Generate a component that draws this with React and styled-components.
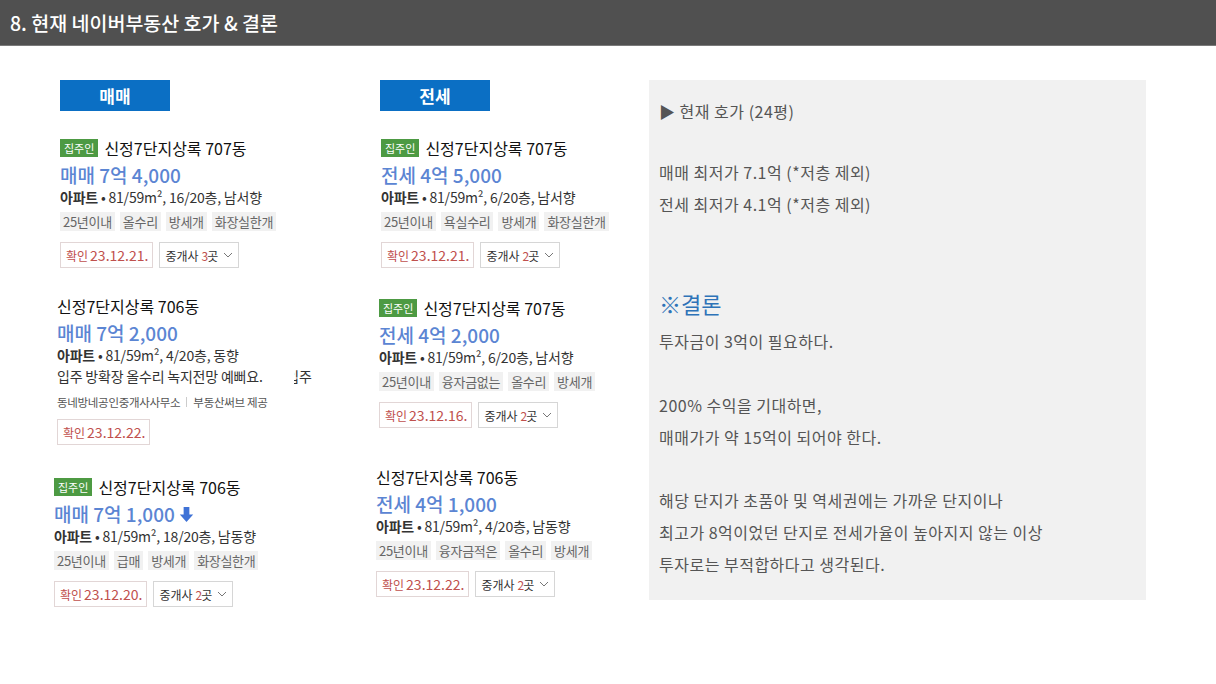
import styled, { createGlobalStyle } from 'styled-components';

const Global = createGlobalStyle`
	body {
		margin: 0;
		background: #fff;
		font-family: "Noto Sans CJK KR", "Noto Sans", sans-serif;
	}
`;

const sale = [
	{
		shift: 6, top: 28, owner: true, name: '신정7단지상록 707동', price: '매매 7억 4,000',
		info: '81/59m², 16/20층, 남서향', tags: ['25년이내', '올수리', '방세개', '화장실한개'],
		date: '23.12.21.', agents: 3,
	},
	{
		shift: 3, top: 29, name: '신정7단지상록 706동', price: '매매 7억 2,000',
		info: '81/59m², 4/20층, 동향', desc: '입주 방확장 올수리 녹지전망 예뻐요.',
		agent: ['동네방네공인중개사사무소', '부동산써브 제공'], date: '23.12.22.',
	},
	{
		shift: 0, top: 33, owner: true, name: '신정7단지상록 706동', price: '매매 7억 1,000', down: true,
		info: '81/59m², 18/20층, 남동향', tags: ['25년이내', '급매', '방세개', '화장실한개'],
		date: '23.12.20.', agents: 2,
	},
];

const rent = [
	{
		shift: 5, top: 28, owner: true, name: '신정7단지상록 707동', price: '전세 4억 5,000',
		info: '81/59m², 6/20층, 남서향', tags: ['25년이내', '욕실수리', '방세개', '화장실한개'],
		date: '23.12.21.', agents: 2,
	},
	{
		shift: 3, top: 31, owner: true, name: '신정7단지상록 707동', price: '전세 4억 2,000',
		info: '81/59m², 6/20층, 남서향', tags: ['25년이내', '융자금없는', '올수리', '방세개'],
		date: '23.12.16.', agents: 2,
	},
	{
		shift: 0, top: 40, name: '신정7단지상록 706동', price: '전세 4억 1,000',
		info: '81/59m², 4/20층, 남동향', tags: ['25년이내', '융자금적은', '올수리', '방세개'],
		date: '23.12.22.', agents: 2,
	},
];

const DownArrow = () => (
	<svg width="15" height="17" viewBox="0 0 14 16">
		<path d="M4.3 1h5.4v7h3.6L7 15 .7 8h3.6z" fill="#3f72d6" />
	</svg>
);

const Chevron = () => (
	<svg width="10" height="6" viewBox="0 0 10 6">
		<path d="M1 1l4 4 4-4" fill="none" stroke="#777" strokeWidth="1" />
	</svg>
);

const Listing = ({ item }) => (
	<Card $shift={item.shift} $top={item.top}>
		<TitleRow>
			{item.owner && <Owner>집주인</Owner>}
			<Name>{item.name}</Name>
		</TitleRow>
		<Price>
			{item.price}
			{item.down && <DownArrow />}
		</Price>
		<Info>
			<b>아파트</b> • {item.info}
		</Info>
		{item.desc && (
			<Desc>
				{item.desc}
				<Cut>
					<span>입주</span>
				</Cut>
			</Desc>
		)}
		{item.agent && (
			<Agent>
				{item.agent[0]}
				<Sep />
				{item.agent[1]}
			</Agent>
		)}
		{item.tags && (
			<Tags>
				{item.tags.map((t) => (
					<Tag key={t}>{t}</Tag>
				))}
			</Tags>
		)}
		<Confirm $tight={!!item.agent}>
			<DateBox>
				<small>확인</small>
				{item.date}
			</DateBox>
			{item.agents && (
				<AgentBox>
					중개사 <em>{item.agents}</em>곳 <Chevron />
				</AgentBox>
			)}
		</Confirm>
	</Card>
);

const App = () => (
	<>
		<Global />
		<Header>8. 현재 네이버부동산 호가 &amp; 결론</Header>
		<Main>
			<Column $width={322}>
				<Label $shift={6}>매매</Label>
				{sale.map((item, i) => (
					<Listing key={i} item={item} />
				))}
			</Column>
			<Column $width={273}>
				<Label $shift={4}>전세</Label>
				{rent.map((item, i) => (
					<Listing key={i} item={item} />
				))}
			</Column>
			<Panel>
				<PanelLine>▶ 현재 호가 (24평)</PanelLine>
				<Blank $h={29} />
				<PanelLine>매매 최저가 7.1억 (*저층 제외)</PanelLine>
				<PanelLine>전세 최저가 4.1억 (*저층 제외)</PanelLine>
				<Blank $h={66} />
				<Conclusion>※결론</Conclusion>
				<PanelLine>투자금이 3억이 필요하다.</PanelLine>
				<Blank $h={32} />
				<PanelLine>200% 수익을 기대하면,</PanelLine>
				<PanelLine>매매가가 약 15억이 되어야 한다.</PanelLine>
				<Blank $h={31} />
				<PanelLine>해당 단지가 초품아 및 역세권에는 가까운 단지이나</PanelLine>
				<PanelLine>최고가 8억이었던 단지로 전세가율이 높아지지 않는 이상</PanelLine>
				<PanelLine>투자로는 부적합하다고 생각된다.</PanelLine>
			</Panel>
		</Main>
	</>
);

const Header = styled.header`
	height: 46px;
	background: #505050;
	border-bottom: 1px solid #7a7a7a;
	box-sizing: border-box;
	color: #fff;
	font-size: 19.5px;
	font-weight: 500;
	line-height: 45px;
	padding-left: 10px;
`;

const Main = styled.main`
	display: flex;
	align-items: flex-start;
	padding: 34px 0 0 54px;
`;

const Column = styled.section`
	width: ${(p) => p.$width}px;
	display: flex;
	flex-direction: column;
	align-items: flex-start;
`;

const Label = styled.div`
	margin-left: ${(p) => p.$shift}px;
	width: 110px;
	height: 31px;
	background: #0b6fc4;
	color: #fff;
	font-size: 17px;
	font-weight: 700;
	line-height: 31px;
	text-align: center;
`;

const Card = styled.article`
	margin-left: ${(p) => p.$shift}px;
	margin-top: ${(p) => p.$top}px;
	display: flex;
	flex-direction: column;
	align-items: flex-start;
	color: #222;
`;

const TitleRow = styled.div`
	display: flex;
	align-items: center;
	height: 18px;
`;

const Owner = styled.span`
	background: #4d9a43;
	color: #fff;
	font-size: 11px;
	height: 18px;
	line-height: 18px;
	padding: 0 4px;
	margin-right: 6px;
`;

const Name = styled.span`
	font-size: 16px;
	font-weight: 400;
	color: #111;
`;

const Price = styled.div`
	margin-top: 7px;
	height: 22px;
	line-height: 22px;
	font-size: 19px;
	font-weight: 500;
	color: #5b85d3;
	display: flex;
	align-items: center;
	gap: 4px;
`;

const Info = styled.div`
	height: 22px;
	line-height: 22px;
	font-size: 14px;
	color: #333;
	letter-spacing: -0.2px;
	b {
		font-weight: 700;
	}
`;

const Desc = styled.div`
	height: 21px;
	line-height: 21px;
	font-size: 14px;
	color: #333;
	display: flex;
	letter-spacing: -0.2px;
`;

const Cut = styled.span`
	margin-left: 31px;
	width: 18px;
	overflow: hidden;
	display: flex;
	justify-content: flex-end;
	span {
		flex-shrink: 0;
	}
`;

const Agent = styled.div`
	margin-top: 6px;
	height: 18px;
	line-height: 18px;
	font-size: 11.5px;
	color: #555;
	display: flex;
	align-items: center;
	letter-spacing: -0.3px;
`;

const Sep = styled.span`
	width: 1px;
	height: 10px;
	background: #ccc;
	margin: 0 6px;
`;

const Tags = styled.div`
	margin-top: 4px;
	display: flex;
	gap: 5px;
`;

const Tag = styled.span`
	background: #f1f1f1;
	color: #666;
	font-size: 13px;
	height: 19px;
	line-height: 19px;
	padding: 0 3px;
	letter-spacing: -0.3px;
`;

const Confirm = styled.div`
	margin-top: ${(p) => (p.$tight ? 8 : 11)}px;
	display: flex;
	gap: 6px;
`;

const DateBox = styled.span`
	border: 1px solid #e2d6d6;
	height: 26px;
	box-sizing: border-box;
	padding: 0 4px 0 5px;
	display: flex;
	align-items: center;
	gap: 2px;
	color: #c0504d;
	font-size: 14px;
	small {
		font-size: 12px;
	}
`;

const AgentBox = styled.span`
	border: 1px solid #d6d6d6;
	height: 26px;
	box-sizing: border-box;
	padding: 0 5px;
	display: flex;
	align-items: center;
	gap: 2px;
	font-size: 12px;
	color: #333;
	em {
		font-style: normal;
		color: #c0504d;
		margin-left: 1px;
		margin-right: -3px;
	}
	svg {
		margin-left: 3px;
	}
`;

const Panel = styled.aside`
	width: 497px;
	height: 520px;
	box-sizing: border-box;
	background: #f1f1f1;
	padding: 15px 10px 0 10px;
	color: #555;
	font-size: 16px;
	letter-spacing: 0.5px;
	display: flex;
	flex-direction: column;
`;

const PanelLine = styled.div`
	height: 32px;
	line-height: 32px;
	white-space: nowrap;
`;

const Blank = styled.div`
	height: ${(p) => p.$h}px;
	flex-shrink: 0;
`;

const Conclusion = styled.div`
	height: 34px;
	line-height: 34px;
	margin-bottom: 5px;
	font-size: 22px;
	letter-spacing: 0;
	color: #2e73b8;
`;

export default App;
